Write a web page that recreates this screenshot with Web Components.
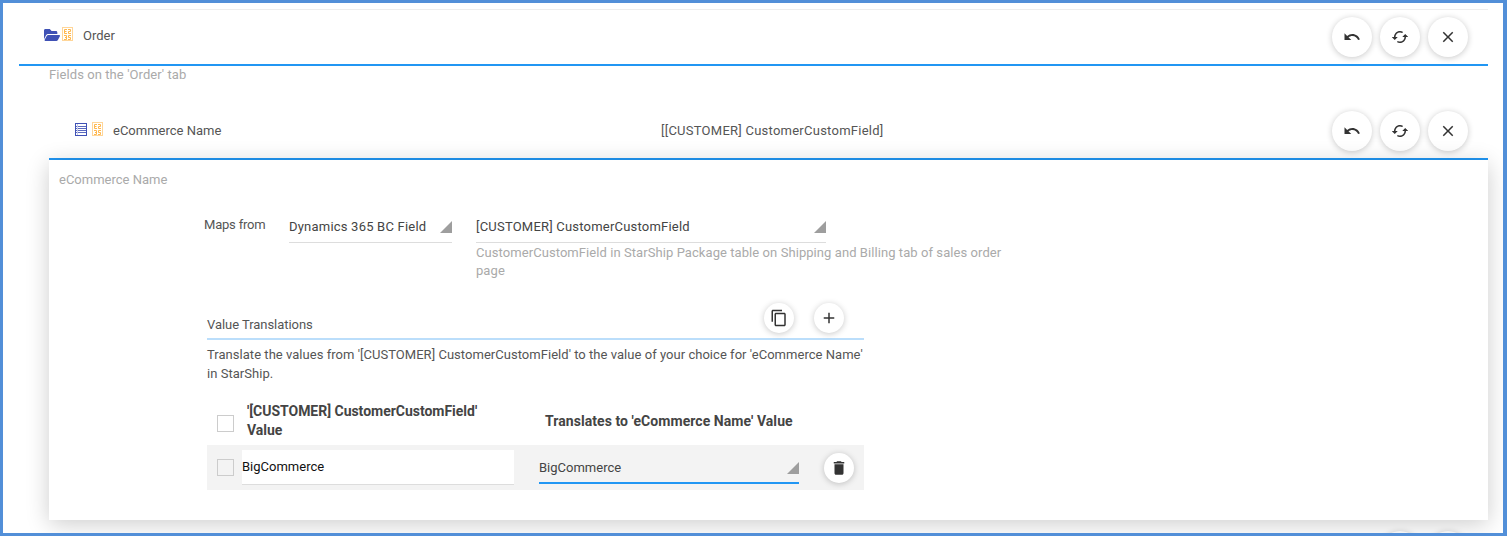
<!DOCTYPE html>
<html><head><meta charset="utf-8">
<style>
html,body{margin:0;padding:0;background:#fff}
body{font:13px/16px Roboto,"Liberation Sans",sans-serif;color:#555;width:1507px;height:536px;overflow:hidden}
</style></head><body>
<template id="t-fab"><style>
:host{display:inline-flex;flex:none;align-items:center;justify-content:center;width:40px;height:40px;border-radius:50%;background:#fff;box-shadow:0 1px 6px rgba(0,0,0,.22);color:#333}
:host([small]){width:30px;height:30px}
svg{width:18px;height:18px;fill:currentColor;display:block}
</style><svg viewBox="0 0 24 24"><path></path></svg></template>

<template id="t-select"><style>
:host{display:flex;align-items:center;height:30px;padding-top:2px;border-bottom:1px solid #ddd;position:relative;color:#444;box-sizing:content-box;letter-spacing:.21px}
:host([focus]){height:28px;padding-top:4px;border-bottom:2px solid #2196f3;letter-spacing:0}
.tri{position:absolute;right:0;bottom:9px;width:0;height:0;border-style:solid;border-width:0 0 12px 12px;border-color:transparent transparent #9e9e9e transparent}
:host([focus]) .tri{bottom:8px}
</style><slot></slot><span class="tri"></span></template>

<template id="t-check"><style>
:host{display:block;flex:none;width:17px;height:17px;box-sizing:border-box;border:1px solid #ccc;background:#fff}
:host([muted]){background:#f3f3f3}
</style></template>

<template id="t-head"><style>
:host{display:flex;align-items:center;height:54px;box-sizing:content-box;border-bottom:2px solid #2196f3;color:#555}
.icons{display:flex;align-items:center;flex:none}
.title{flex:none}
.val{flex:1}
.btns{display:flex;gap:8px;flex:none;margin-right:20px}
</style><div class="icons"><slot name="icons"></slot></div><div class="title"><slot name="title"></slot></div><div class="val"><slot name="val"></slot></div><div class="btns"><x-fab icon="undo"></x-fab><x-fab icon="sync"></x-fab><x-fab icon="close"></x-fab></div></template>

<template id="t-frame"><style>
:host{display:block;width:1507px;height:536px;box-sizing:border-box;border:solid #528fd8;border-width:3px 4px 3px 3px;overflow:hidden;position:relative}
.in{padding:6px 15px 0 16px}
</style><div class="in"><slot></slot></div></template>

<template id="t-card"><style>
:host{display:block;position:relative;z-index:1;background:#fff;box-shadow:0 4px 22px rgba(0,0,0,.2);padding:12px 0 28px 0;height:320px}
.t{margin-left:10px;color:#aaa}
.form{margin:22px 0 0 155px}
</style><div class="t"><slot name="title"></slot></div><div class="form"><slot></slot></div></template>

<template id="t-trans"><style>
:host{display:block;width:657px;margin:23px 0 0 3px}
.h{display:flex;justify-content:space-between;height:35px;border-bottom:2px solid #bbdefb}
.lbl{align-self:flex-end;padding-bottom:5px;letter-spacing:-.05px}
.b{display:flex;gap:20px;margin-right:20px}
.d{margin-top:5px;line-height:19px;color:#555;letter-spacing:.035px}
</style><div class="h"><span class="lbl"><slot name="label"></slot></span><div class="b"><slot name="btns"></slot></div></div><div class="d"><slot name="desc"></slot></div><slot></slot></template>

<x-frame>
  <div style="height:1px;margin-left:30px;background:#eee"></div>
  <x-head style="padding-left:25px">
    <span slot="icons" style="display:flex;align-items:center;gap:2px;margin:-6px 10px 0 0">
      <svg width="16" height="12" viewBox="0 64 576 384" preserveAspectRatio="none" style="margin-top:2px"><path fill="#3f51b5" d="M572.694 292.093L500.27 416.248A63.997 63.997 0 0 1 444.989 448H45.025c-18.523 0-30.064-20.093-20.731-36.093l72.424-124.155A64 64 0 0 1 152 256h399.964c18.523 0 30.064 20.093 20.73 36.093zM152 224h328v-48c0-26.51-21.49-48-48-48H272l-64-64H48C21.49 64 0 85.49 0 112v278.046l69.077-118.418C86.214 242.25 117.989 224 152 224z"/></svg>
      <svg width="11" height="14" viewBox="0 0 11 14" fill="none" stroke="#ffb74d"><rect x=".5" y=".5" width="10" height="13" stroke="#ffd699"/><path d="M5 2.500H2.500V6.500H5M2.500 4.500H4.500M6 2.500H8.500V4.500H6.500V6.500H9M2 8.500H4.500V12.500H2M3 10.500H4.500M9 8.500H6.500V10.500H8.500V12.500H6"/></svg>
    </span>
    <span slot="title" style="display:block;margin-top:-2px">Order</span>
  </x-head>
  <div style="margin-left:30px">
    <div style="color:#aaa;padding-top:1px;letter-spacing:.08px">Fields on the 'Order' tab</div>
    <x-head style="padding-left:26px;margin-top:21px">
      <span slot="icons" style="display:flex;align-items:center;gap:5px;margin:-4px 10px 0 0">
        <svg width="12" height="13" viewBox="0 0 12 13"><rect x=".5" y=".5" width="11" height="12" fill="#fff" stroke="#3f51b5"/><path d="M1 3.500H11M1 5.500H11M1 7.500H11M1 9.500H11" stroke="#5c6bc0" fill="none"/><path d="M2.500 1V12" stroke="#c5cae9" fill="none"/></svg>
        <svg width="11" height="14" viewBox="0 0 11 14" fill="none" stroke="#ffb74d"><rect x=".5" y=".5" width="10" height="13" stroke="#ffd699"/><path d="M5 2.500H2.500V6.500H5M2.500 4.500H4.500M6 2.500H8.500V4.500H6.500V6.500H9M2 8.500H4.500V12.500H2M3 10.500H4.500M9 8.500H6.500V10.500H8.500V12.500H6"/></svg>
      </span>
      <span slot="title" style="display:block;width:548px">eCommerce Name</span>
      <span slot="val" style="letter-spacing:.25px">[[CUSTOMER] CustomerCustomField]</span>
    </x-head>
    <x-card>
      <span slot="title">eCommerce Name</span>
      <div style="display:flex">
        <span style="width:85px;flex:none;padding-top:7px;box-sizing:border-box;line-height:16px;letter-spacing:-.2px">Maps from</span>
        <x-select style="width:163px;flex:none;margin-right:24px">Dynamics 365 BC Field</x-select>
        <div style="width:350px;flex:none">
          <x-select>[CUSTOMER] CustomerCustomField</x-select>
          <div style="width:530px;color:#aaa;padding-top:1px;line-height:18px;letter-spacing:.07px">CustomerCustomField in StarShip Package table on Shipping and Billing tab of sales order page</div>
        </div>
      </div>
      <x-trans>
        <span slot="label">Value Translations</span>
        <x-fab small icon="copy" slot="btns"></x-fab>
        <x-fab small icon="add" slot="btns"></x-fab>
        <span slot="desc">Translate the values from '[CUSTOMER] CustomerCustomField' to the value of your choice for 'eCommerce Name' in StarShip.</span>
        <div style="display:flex;align-items:center;height:44px;margin-top:18px;padding-left:10px;font-weight:700;font-size:14px;line-height:19px;color:#444">
          <x-check></x-check>
          <span style="width:298px;margin:-5px 0 0 13px;flex:none;box-sizing:border-box;padding-right:50px;letter-spacing:-.02px">'[CUSTOMER] CustomerCustomField' Value</span>
          <span style="margin-top:-4px;letter-spacing:.06px">Translates to 'eCommerce Name' Value</span>
        </div>
        <div style="display:flex;align-items:center;height:45px;background:#f3f3f3;padding-left:10px">
          <x-check muted></x-check>
          <span style="display:flex;align-items:center;flex:none;box-sizing:border-box;width:272px;height:35px;margin-left:8px;background:#fff;border-bottom:1px solid #ddd;color:#111">BigCommerce</span>
          <x-select focus style="width:260px;flex:none;margin:-1px 0 0 25px">BigCommerce</x-select>
          <x-fab small icon="delete" style="margin-left:25px"></x-fab>
        </div>
      </x-trans>
    </x-card>
    <div style="display:flex;justify-content:flex-end;gap:8px;margin:11px 20px 0 0"><x-fab icon="sync"></x-fab><x-fab icon="close"></x-fab></div>
  </div>
  <svg style="position:absolute;left:1219px;top:294px" width="13" height="20" viewBox="0 0 13 20"><path d="M.5.5V16l3.500-3.500 2.500 6 2.500-1-2.500-6H11.500z" fill="#fff" stroke="#222"/></svg>
</x-frame>
<script>
const ICONS={
undo:"M12.5 8c-2.65 0-5.05.99-6.9 2.6L2 7v9h9l-3.62-3.62c1.39-1.16 3.16-1.88 5.12-1.88 3.54 0 6.55 2.31 7.6 5.5l2.37-.78C21.08 11.03 17.15 8 12.5 8z",
sync:"M12 4V1L8 5l4 4V6c3.31 0 6 2.69 6 6 0 1.01-.25 1.97-.7 2.8l1.46 1.46C19.54 15.03 20 13.57 20 12c0-4.42-3.58-8-8-8zm0 14c-3.31 0-6-2.69-6-6 0-1.01.25-1.97.7-2.8L5.24 7.74C4.46 8.97 4 10.43 4 12c0 4.42 3.58 8 8 8v3l4-4-4-4v3z",
close:"M19 6.41L17.59 5 12 10.59 6.41 5 5 6.41 10.59 12 5 17.59 6.41 19 12 13.41 17.59 19 19 17.59 13.41 12z",
copy:"M16 1H4c-1.1 0-2 .9-2 2v14h2V3h12V1zm3 4H8c-1.1 0-2 .9-2 2v14c0 1.1.9 2 2 2h11c1.1 0 2-.9 2-2V7c0-1.1-.9-2-2-2zm0 16H8V7h11v14z",
add:"M19 13h-6v6h-2v-6H5v-2h6V5h2v6h6v2z",
delete:"M6 19c0 1.1.9 2 2 2h8c1.1 0 2-.9 2-2V7H6v12zM19 4h-3.5l-1-1h-5l-1 1H5v2h14V4z"};
function def(name,tpl,init){
  customElements.define(name,class extends HTMLElement{
    constructor(){super();this.attachShadow({mode:"open"}).appendChild(document.getElementById(tpl).content.cloneNode(true));}
    connectedCallback(){if(init)init(this);}
  });
}
def("x-fab","t-fab",el=>{
  el.shadowRoot.querySelector("path").setAttribute("d",ICONS[el.getAttribute("icon")]);
  if(el.getAttribute("icon")==="sync")el.shadowRoot.querySelector("svg").style.transform="rotate(90deg)";
});
def("x-select","t-select");
def("x-check","t-check");
def("x-head","t-head");
def("x-frame","t-frame");
def("x-card","t-card");
def("x-trans","t-trans");
</script>
</body></html>
